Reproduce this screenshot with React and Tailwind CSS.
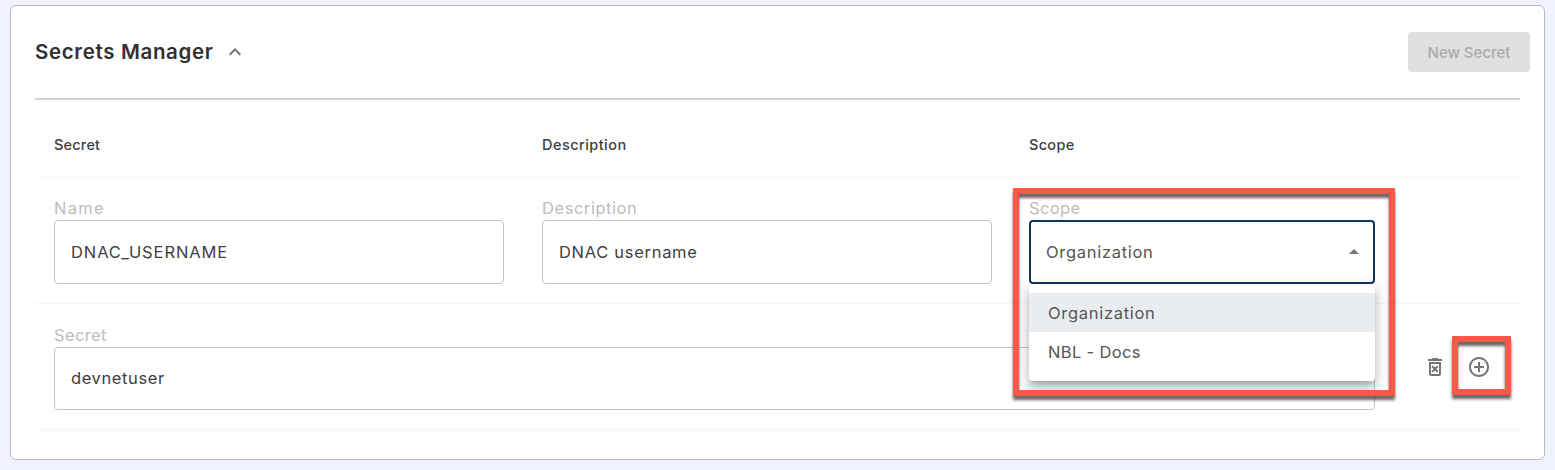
import { MdOutlineDeleteForever, MdAddCircleOutline, MdKeyboardArrowUp, MdArrowDropUp } from "react-icons/md";

function Field({ label, value, className, labelClass, valueClass }) {
  return (
    <label className={`flex flex-col ${className}`}>
      <span className={`flex h-[23px] items-center text-[16.5px] leading-none text-[#bdbdbd] ${labelClass}`}>{label}</span>
      <span className={`flex flex-1 items-center rounded border border-[#c4c4c4] pl-4 text-[16.5px] leading-none text-[#404040] ${valueClass}`}>{value}</span>
    </label>
  );
}

function ScopeSelect() {
  return (
    <div className="relative flex h-[87px] w-[346px] flex-col">
      <span className="flex h-[23px] items-center text-[16.5px] leading-none tracking-[0.35px] text-[#bdbdbd]">Scope</span>
      <button className="flex flex-1 items-center justify-between rounded border-2 border-[#0d3862] pr-[7px] pl-[15px] text-[16.5px] leading-none tracking-[0.7px] text-[#555]">
        Organization
        <MdArrowDropUp className="size-6 text-[#757575]" />
      </button>
      <ul className="absolute top-[87px] left-0 z-10 h-[97px] w-full rounded-b bg-white pt-[9px] text-[16.5px] leading-none text-[#555] shadow-[0_5px_5px_-3px_rgba(0,0,0,0.2),0_8px_10px_1px_rgba(0,0,0,0.14),0_3px_14px_2px_rgba(0,0,0,0.12)]">
        <li className="flex h-[39px] items-center bg-[#eaedf0] pt-px pl-[19px] tracking-[0.7px]">Organization</li>
        <li className="flex h-[39px] items-center pt-px pl-[19px] tracking-[0.35px]">NBL - Docs</li>
      </ul>
      <div className="pointer-events-none absolute -top-[9px] -left-[16px] z-20 h-[208px] w-[382px] border-6 border-[#fd574a] drop-shadow-[0_4px_1.5px_rgba(0,0,0,0.6)]" />
    </div>
  );
}

export default function App() {
  return (
    <main className="h-[470px] bg-[#f0f2ff] px-[10px] pt-[5px] font-['Inter',sans-serif]">
      <section className="h-[455px] rounded-md border border-[#b9b9bd] bg-white">
        <header className="flex h-[92px] items-center justify-between pr-[14px] pl-6">
          <div className="flex items-center gap-[9px]">
            <h1 className="text-[20.5px] leading-none font-semibold tracking-[0.65px] text-[#303030]">Secrets Manager</h1>
            <MdKeyboardArrowUp className="size-6 text-[#757575]" />
          </div>
          <button className="h-10 w-[122px] rounded bg-[#e0e0e0] text-[15px] leading-none font-medium text-[#aaa]">New Secret</button>
        </header>
        <div className="mx-6 border-t-2 border-[#d2d2d2]">
          <div className="flex h-[78px] border-b border-[#f5f5f5] pt-[38px] pl-[19px] text-[14.5px] leading-none font-medium text-[#404040]">
            <span className="w-[488px] tracking-[0.2px]">Secret</span>
            <span className="w-[487px] tracking-[0.45px]">Description</span>
            <span className="tracking-[0.3px]">Scope</span>
          </div>
          <div className="flex h-[126px] border-b border-[#f5f5f5] pt-[19px] pl-[19px]">
            <Field label="Name" value="DNAC_USERNAME" className="mr-[38px] h-[87px] w-[450px]" labelClass="tracking-[1.3px]" valueClass="tracking-[0.9px]" />
            <Field label="Description" value="DNAC username" className="mr-[37px] h-[87px] w-[450px]" labelClass="tracking-[0.55px]" valueClass="tracking-[0.7px]" />
            <ScopeSelect />
          </div>
          <div className="flex h-[126px] border-b border-[#f5f5f5] pt-5 pl-[19px]">
            <Field label="Secret" value="devnetuser" className="h-[86px] w-[1321px]" labelClass="tracking-[0.35px]" valueClass="tracking-[0.6px]" />
            <div className="ml-12 flex h-[86px] items-center gap-5 text-[#757575]">
              <MdOutlineDeleteForever className="size-6" />
              <div className="relative">
                <MdAddCircleOutline className="size-6" />
                <div className="pointer-events-none absolute -top-[19px] -left-[15px] h-[59px] w-[59px] border-6 border-[#fd574a] drop-shadow-[0_4px_1.5px_rgba(0,0,0,0.6)]" />
              </div>
            </div>
          </div>
        </div>
      </section>
    </main>
  );
}
